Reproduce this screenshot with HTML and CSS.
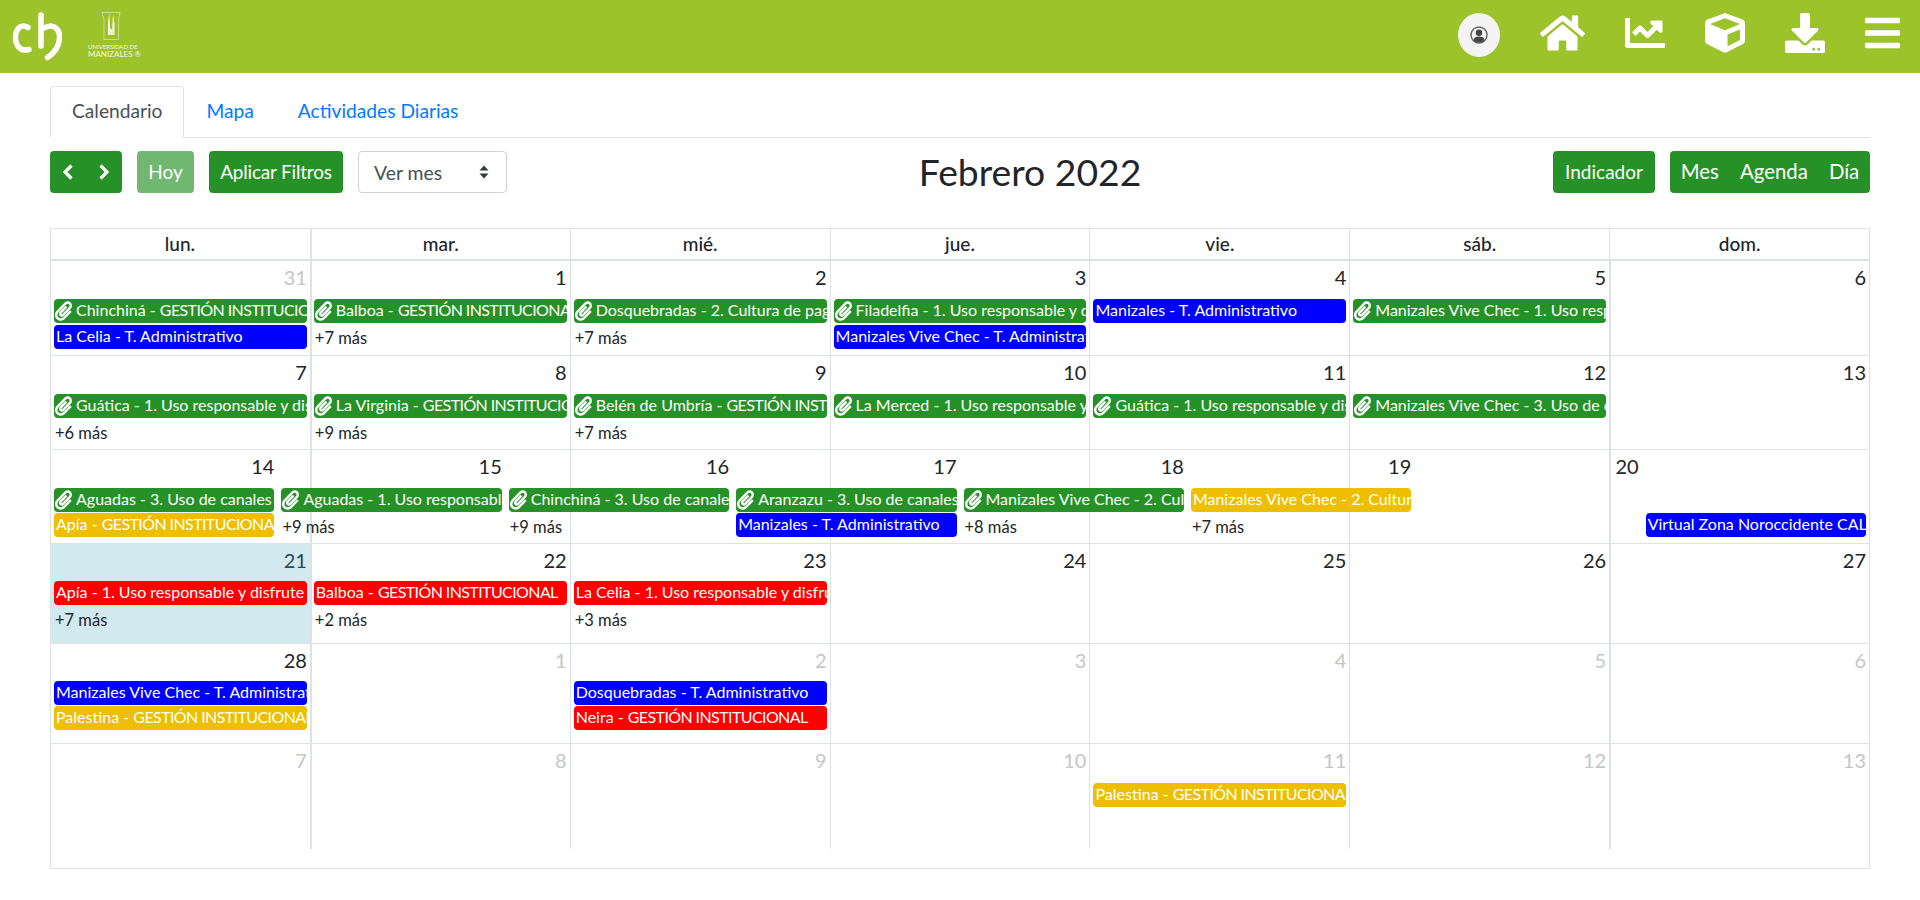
FILE: index.html
```html
<!DOCTYPE html>
<html lang="es">
<head>
<meta charset="utf-8">
<title>Calendario</title>
<link rel="stylesheet" href="styles.css">
</head>
<body>
<svg class="defs" width="0" height="0" aria-hidden="true">
  <symbol id="clip" viewBox="0 0 448 512"><path d="M43.246 466.142c-58.43-60.289-57.341-157.511 1.386-217.581L254.392 34c44.316-45.332 116.351-45.336 160.671 0 43.89 44.894 43.943 117.329 0 162.276L232.214 383.128c-29.855 30.537-78.633 30.111-107.982-.998-28.275-29.97-27.368-77.473 1.452-106.953l143.743-146.835c6.182-6.314 16.312-6.422 22.626-.241l22.861 22.379c6.315 6.182 6.422 16.312.241 22.626L171.427 319.927c-4.932 5.045-5.236 13.428-.648 18.292 4.372 4.634 11.245 4.711 15.688.165l182.849-186.851c19.613-20.062 19.613-52.725-.011-72.798-19.189-19.627-49.957-19.637-69.154 0L90.39 293.295c-34.763 35.56-35.299 93.12-1.191 128.313 34.01 35.093 88.985 35.137 123.058.286l172.06-175.999c6.177-6.319 16.307-6.433 22.626-.256l22.877 22.364c6.319 6.177 6.434 16.307.256 22.626l-172.06 175.998c-59.576 60.938-155.943 60.216-214.77-.485z"/></symbol>
</svg>

<header class="topbar">
  <div class="brand">
    <svg class="logo-ch" viewBox="0 0 62 73"><path d="M28 27.500C20 23 15.500 30 15.500 37.500C15.500 45 20 52 29 49.500"/><path d="M41 15V46"/><path d="M44 28C52 23 60 28 59.500 38C59 48 53 54 47.500 57.500"/></svg>
    <div class="logo-um">
      <svg class="logo-um-mark" viewBox="0 0 20 30"><path class="um-frame" d="M1 1.500H19L17.500 9V28.500H3V9Z"/><path class="um-tower" d="M7 24V12L8.300 3 9.400 24H11V24L12 3 13.400 12V24H11.500V18H8.800V24Z"/></svg>
      <span class="um-line1">UNIVERSIDAD DE</span>
      <span class="um-line2">MANIZALES ®</span>
    </div>
  </div>
  <nav class="topnav">
    <span class="avatar"><svg class="avatar-icon" viewBox="0 0 18 18"><circle class="avatar-ring" cx="9" cy="9" r="8"/><circle class="avatar-fill" cx="9" cy="6.800" r="3.200"/><path class="avatar-fill" d="M3.500 14.200C4 11.400 6 10.600 9 10.600s5 .8 5.500 3.600C13 15.800 11 16.400 9 16.400s-4-.6-5.500-2.200Z"/></svg></span>
    <svg class="nav-icon i-home" viewBox="0 0 576 512"><path d="M280.37 148.26L96 300.11V464a16 16 0 0 0 16 16l112.06-.29a16 16 0 0 0 15.92-16V368a16 16 0 0 1 16-16h64a16 16 0 0 1 16 16v95.64a16 16 0 0 0 16 16.05L464 480a16 16 0 0 0 16-16V300L295.67 148.26a12.19 12.19 0 0 0-15.3 0zM571.6 251.47L488 182.56V44.05a12 12 0 0 0-12-12h-56a12 12 0 0 0-12 12v72.61L318.47 43a48 48 0 0 0-61 0L4.34 251.47a12 12 0 0 0-1.6 16.9l25.5 31A12 12 0 0 0 45.15 301l235.22-193.74a12.19 12.19 0 0 1 15.3 0L530.9 301a12 12 0 0 0 16.9-1.6l25.5-31a12 12 0 0 0-1.7-16.93z"/></svg>
    <svg class="nav-icon" viewBox="0 0 512 512"><path d="M496 384H64V80c0-8.84-7.16-16-16-16H16C7.16 64 0 71.16 0 80v336c0 17.67 14.33 32 32 32h464c8.84 0 16-7.16 16-16v-32c0-8.84-7.16-16-16-16zM464 96H345.94c-21.38 0-32.09 25.85-16.97 40.97l32.4 32.4L288 242.75l-73.37-73.37c-12.5-12.5-32.76-12.5-45.25 0l-68.69 68.69c-6.25 6.25-6.25 16.38 0 22.63l22.62 22.62c6.25 6.25 16.38 6.25 22.63 0L192 237.25l73.37 73.37c12.5 12.5 32.76 12.5 45.25 0l96-96 32.4 32.4c15.12 15.12 40.97 4.41 40.97-16.97V112c.01-8.84-7.15-16-15.99-16z"/></svg>
    <svg class="nav-icon" viewBox="0 0 512 512"><path d="M239.1 6.3l-208 78c-18.7 7-31.1 25-31.1 45v225.1c0 18.2 10.3 34.8 26.5 42.9l208 104c13.5 6.8 29.4 6.8 42.9 0l208-104c16.3-8.1 26.5-24.8 26.5-42.9V129.3c0-20-12.4-37.9-31.1-44.9l-208-78C262 2.2 250 2.2 239.1 6.3zM256 68.4l192 72v1.1l-192 78-192-78v-1.1l192-72zm32 356V275.5l160-65v133.9l-160 80z"/></svg>
    <svg class="nav-icon" viewBox="0 0 512 512"><path d="M216 0h80c13.3 0 24 10.7 24 24v168h87.7c17.8 0 26.7 21.5 14.1 34.1L269.7 378.3c-7.5 7.5-19.8 7.5-27.3 0L90.1 226.1c-12.6-12.6-3.7-34.1 14.1-34.1H192V24c0-13.3 10.7-24 24-24zm296 376v112c0 13.3-10.7 24-24 24H24c-13.3 0-24-10.7-24-24V376c0-13.3 10.7-24 24-24h146.7l49 49c20.1 20.1 52.5 20.1 72.6 0l49-49H488c13.3 0 24 10.7 24 24zm-124 88c0-11-9-20-20-20s-20 9-20 20 9 20 20 20 20-9 20-20zm64 0c0-11-9-20-20-20s-20 9-20 20 9 20 20 20 20-9 20-20z"/></svg>
    <svg class="nav-icon i-bars" viewBox="0 0 448 512"><path d="M16 132h416c8.837 0 16-7.163 16-16V76c0-8.837-7.163-16-16-16H16C7.163 60 0 67.163 0 76v40c0 8.837 7.163 16 16 16zm0 160h416c8.837 0 16-7.163 16-16v-40c0-8.837-7.163-16-16-16H16c-8.837 0-16 7.163-16 16v40c0 8.837 7.163 16 16 16zm0 160h416c8.837 0 16-7.163 16-16v-40c0-8.837-7.163-16-16-16H16c-8.837 0-16 7.163-16 16v40c0 8.837 7.163 16 16 16z"/></svg>
  </nav>
</header>

<main class="page">
  <div class="tabs">
    <a class="tab tab-active">Calendario</a>
    <a class="tab">Mapa</a>
    <a class="tab">Actividades Diarias</a>
  </div>

  <div class="toolbar">
    <div class="tool-group">
      <div class="btn btn-arrows">
        <svg class="chev" viewBox="0 0 12 18"><path d="M9.500 2.500L3 9l6.500 6.500"/></svg>
        <svg class="chev" viewBox="0 0 12 18"><path d="M2.500 2.500L9 9l-6.500 6.500"/></svg>
      </div>
      <div class="btn btn-faded">Hoy</div>
      <div class="btn btn-filter">Aplicar Filtros</div>
      <div class="select">
        <span>Ver mes</span>
        <svg class="select-arrows" viewBox="0 0 10 14"><path d="M5 0.500L9.500 5.500H0.500ZM5 13.500L0.500 8.500H9.500Z"/></svg>
      </div>
    </div>
    <h2 class="title">Febrero 2022</h2>
    <div class="tool-group">
      <div class="btn btn-indicator">Indicador</div>
      <div class="btn btn-views"><span>Mes</span><span>Agenda</span><span>Día</span></div>
    </div>
  </div>

  <section class="cal">
    <div class="cal-head">
      <div class="head-cell">lun.</div><div class="head-cell">mar.</div><div class="head-cell">mié.</div><div class="head-cell">jue.</div><div class="head-cell">vie.</div><div class="head-cell">sáb.</div><div class="head-cell">dom.</div>
    </div>

    <div class="week week-1">
      <div class="week-bg"><i></i><i></i><i></i><i></i><i></i><i></i><i></i></div>
      <div class="week-fg">
        <div class="day"><div class="num muted">31</div><div class="ev green"><svg class="clip"><use href="#clip"/></svg>Chinchiná - <span class="caps">GESTIÓN INSTITUCIONAL</span></div><div class="ev blue">La Celia - T. Administrativo</div></div>
        <div class="day"><div class="num">1</div><div class="ev green"><svg class="clip"><use href="#clip"/></svg>Balboa - <span class="caps">GESTIÓN INSTITUCIONAL</span></div><div class="more">+7 más</div></div>
        <div class="day"><div class="num">2</div><div class="ev green"><svg class="clip"><use href="#clip"/></svg>Dosquebradas - 2. Cultura de pago</div><div class="more">+7 más</div></div>
        <div class="day"><div class="num">3</div><div class="ev green"><svg class="clip"><use href="#clip"/></svg>Filadelfia - 1. Uso responsable y disfrute</div><div class="ev blue">Manizales Vive Chec - T. Administrativo</div></div>
        <div class="day"><div class="num">4</div><div class="ev blue">Manizales - T. Administrativo</div></div>
        <div class="day"><div class="num">5</div><div class="ev green"><svg class="clip"><use href="#clip"/></svg>Manizales Vive Chec - 1. Uso responsable</div></div>
        <div class="day"><div class="num">6</div></div>
      </div>
    </div>

    <div class="week week-2">
      <div class="week-bg"><i></i><i></i><i></i><i></i><i></i><i></i><i></i></div>
      <div class="week-fg">
        <div class="day"><div class="num">7</div><div class="ev green"><svg class="clip"><use href="#clip"/></svg>Guática - 1. Uso responsable y disfrute</div><div class="more">+6 más</div></div>
        <div class="day"><div class="num">8</div><div class="ev green"><svg class="clip"><use href="#clip"/></svg>La Virginia - <span class="caps">GESTIÓN INSTITUCIONAL</span></div><div class="more">+9 más</div></div>
        <div class="day"><div class="num">9</div><div class="ev green"><svg class="clip"><use href="#clip"/></svg>Belén de Umbría - <span class="caps">GESTIÓN INSTITUCIONAL</span></div><div class="more">+7 más</div></div>
        <div class="day"><div class="num">10</div><div class="ev green"><svg class="clip"><use href="#clip"/></svg>La Merced - 1. Uso responsable y disfrute</div></div>
        <div class="day"><div class="num">11</div><div class="ev green"><svg class="clip"><use href="#clip"/></svg>Guática - 1. Uso responsable y disfrute</div></div>
        <div class="day"><div class="num">12</div><div class="ev green"><svg class="clip"><use href="#clip"/></svg>Manizales Vive Chec - 3. Uso de canales</div></div>
        <div class="day"><div class="num">13</div></div>
      </div>
    </div>

    <div class="week week-3">
      <div class="week-bg"><i></i><i></i><i></i><i></i><i></i><i></i><i></i></div>
      <div class="week-fg week-fg-8">
        <div class="day"><div class="num">14</div><div class="ev green"><svg class="clip"><use href="#clip"/></svg>Aguadas - 3. Uso de canales</div><div class="ev yellow">Apía - <span class="caps">GESTIÓN INSTITUCIONAL</span></div></div>
        <div class="day"><div class="num">15</div><div class="ev green"><svg class="clip"><use href="#clip"/></svg>Aguadas - 1. Uso responsable</div><div class="more">+9 más</div></div>
        <div class="day"><div class="num">16</div><div class="ev green"><svg class="clip"><use href="#clip"/></svg>Chinchiná - 3. Uso de canales</div><div class="more">+9 más</div></div>
        <div class="day"><div class="num">17</div><div class="ev green"><svg class="clip"><use href="#clip"/></svg>Aranzazu - 3. Uso de canales</div><div class="ev blue">Manizales - T. Administrativo</div></div>
        <div class="day"><div class="num">18</div><div class="ev green"><svg class="clip"><use href="#clip"/></svg>Manizales Vive Chec - 2. Cultura</div><div class="more">+8 más</div></div>
        <div class="day"><div class="num">19</div><div class="ev yellow">Manizales Vive Chec - 2. Cultura</div><div class="more">+7 más</div></div>
        <div class="day"><div class="num">20</div></div>
        <div class="day"><div class="num"></div><div class="ev ev-empty"></div><div class="ev blue">Virtual Zona Noroccidente CALDAS</div></div>
      </div>
    </div>

    <div class="week week-4">
      <div class="week-bg"><i class="today"></i><i></i><i></i><i></i><i></i><i></i><i></i></div>
      <div class="week-fg">
        <div class="day"><div class="num num-today">21</div><div class="ev red">Apía - 1. Uso responsable y disfrute</div><div class="more">+7 más</div></div>
        <div class="day"><div class="num">22</div><div class="ev red">Balboa - <span class="caps">GESTIÓN INSTITUCIONAL</span></div><div class="more">+2 más</div></div>
        <div class="day"><div class="num">23</div><div class="ev red">La Celia - 1. Uso responsable y disfrute</div><div class="more">+3 más</div></div>
        <div class="day"><div class="num">24</div></div>
        <div class="day"><div class="num">25</div></div>
        <div class="day"><div class="num">26</div></div>
        <div class="day"><div class="num">27</div></div>
      </div>
    </div>

    <div class="week week-5">
      <div class="week-bg"><i></i><i></i><i></i><i></i><i></i><i></i><i></i></div>
      <div class="week-fg">
        <div class="day"><div class="num">28</div><div class="ev blue">Manizales Vive Chec - T. Administrativo</div><div class="ev yellow">Palestina - <span class="caps">GESTIÓN INSTITUCIONAL</span></div></div>
        <div class="day"><div class="num muted">1</div></div>
        <div class="day"><div class="num muted">2</div><div class="ev blue">Dosquebradas - T. Administrativo</div><div class="ev red">Neira - <span class="caps">GESTIÓN INSTITUCIONAL</span></div></div>
        <div class="day"><div class="num muted">3</div></div>
        <div class="day"><div class="num muted">4</div></div>
        <div class="day"><div class="num muted">5</div></div>
        <div class="day"><div class="num muted">6</div></div>
      </div>
    </div>

    <div class="week week-6">
      <div class="week-bg"><i></i><i></i><i></i><i></i><i></i><i></i><i></i></div>
      <div class="week-fg">
        <div class="day"><div class="num muted">7</div></div>
        <div class="day"><div class="num muted">8</div></div>
        <div class="day"><div class="num muted">9</div></div>
        <div class="day"><div class="num muted">10</div></div>
        <div class="day"><div class="num muted">11</div><div class="ev yellow">Palestina - <span class="caps">GESTIÓN INSTITUCIONAL</span></div></div>
        <div class="day"><div class="num muted">12</div></div>
        <div class="day"><div class="num muted">13</div></div>
      </div>
    </div>
  </section>
</main>
</body>
</html>
```

FILE: styles.css
```css
* { box-sizing: border-box; }
html, body { margin: 0; padding: 0; }
body {
  font-family: "Lato", "Liberation Sans", sans-serif;
  color: #212529;
  background: #fff;
  font-size: 16px;
}
.defs { position: absolute; }

/* top bar */
.topbar {
  height: 73px;
  background: #9dc32b;
  display: flex;
  justify-content: space-between;
  align-items: flex-start;
  padding: 0 20px 0 0;
}
.brand { display: flex; align-items: flex-start; }
.logo-ch { width: 62px; height: 73px; display: block; }
.logo-ch path { fill: none; stroke: #fff; stroke-width: 5.500; stroke-linecap: round; }
.logo-um {
  margin: 11px 0 0 26px;
  width: 50px;
  display: flex;
  flex-direction: column;
  color: #f4f8e2;
  white-space: nowrap;
}
.logo-um-mark { width: 20px; height: 30px; margin: 0 0 3px 13px; display: block; }
.um-frame { fill: none; stroke: #dbe9a7; stroke-width: .7; }
.um-tower { fill: #fff; }
.um-line1 { font-size: 6px; line-height: 6px; }
.um-line2 { font-size: 8px; line-height: 8px; }

.topnav { display: flex; align-items: flex-start; gap: 40px; padding-top: 13px; }
.nav-icon { height: 40px; width: 40px; fill: #fff; display: block; }
.i-home { width: 45px; }
.i-bars { width: 35px; }
.avatar {
  width: 42px;
  height: 44px;
  border-radius: 50%;
  background: #f4f4f4;
  display: flex;
  align-items: center;
  justify-content: center;
}
.avatar-icon { width: 18px; height: 18px; }
.avatar-ring { fill: none; stroke: #666; stroke-width: 1.500; }
.avatar-fill { fill: #444; }

/* page */
.page { padding: 13px 50px 0; }
.tabs {
  display: flex;
  height: 52px;
  border-bottom: 1px solid #dee2e6;
}
.tab {
  padding: 0 21px;
  height: 52px;
  line-height: 48px;
  font-size: 19.200px;
  color: #007bff;
  border: 1px solid transparent;
  border-radius: 4px 4px 0 0;
}
.tab-active {
  color: #495057;
  background: #fff;
  border-color: #dee2e6 #dee2e6 #fff;
}

.toolbar {
  display: flex;
  justify-content: space-between;
  align-items: center;
  margin-top: 13px;
  height: 42px;
}
.tool-group { display: flex; gap: 15px; }
.btn {
  height: 42px;
  display: flex;
  align-items: center;
  justify-content: center;
  padding: 0 0 2px;
  background: #269126;
  color: #fff;
  border-radius: 4px;
  font-size: 19px;
  white-space: nowrap;
}
.btn-filter { width: 134px; letter-spacing: -.2px; }
.btn-faded { opacity: .65; width: 57px; }
.btn-arrows { width: 72px; justify-content: space-between; padding: 0 12px; }
.btn-indicator { width: 102px; }
.chev { width: 12px; height: 18px; fill: none; stroke: #fff; stroke-width: 3.200; }
.btn-views { width: 200px; gap: 21px; font-size: 20.400px; }
.select {
  width: 149px;
  height: 42px;
  border: 1px solid #ced4da;
  border-radius: 4px;
  background: #fff;
  color: #495057;
  font-size: 19.400px;
  display: flex;
  align-items: center;
  justify-content: space-between;
  padding: 0 17px 0 15px;
}
.select-arrows { width: 10px; height: 14px; fill: #343a40; }
.title { margin: 0; font-size: 37.300px; font-weight: 400; line-height: 1.2; }

/* calendar */
.cal {
  margin-top: 35px;
  height: 641px;
  border: 1px solid #dee2e6;
  display: flex;
  flex-direction: column;
}
.cal-head {
  display: grid;
  grid-template-columns: repeat(7, 1fr);
  height: 32px;
  margin-left: -1px;
  border-bottom: 2px solid #dee2e6;
}
.head-cell {
  text-align: center;
  font-size: 19px;
  font-weight: 500;
  line-height: 29px;
  border-left: 1px solid #dee2e6;
}
.head-cell:first-child { border-left: 0; }
.head-cell:nth-child(2) { border-left-width: 2px; }

.week { position: relative; border-bottom: 1px solid #dee2e6; margin-left: -1px; }
.week-1 { height: 95px; --top: 38px; --gap: 2px; }
.week-2 { height: 94px; --top: 38px; --gap: 2px; }
.week-3 { height: 94px; --top: 38px; --gap: 1px; }
.week-4 { height: 100px; --top: 37px; --gap: 1px; }
.week-5 { height: 100px; --top: 37px; --gap: 1px; }
.week-6 { height: 105px; --top: 39px; --gap: 1px; border-bottom: 0; }

.week-bg {
  position: absolute;
  inset: 0;
  display: grid;
  grid-template-columns: repeat(7, 1fr);
}
.week-bg i { display: block; border-left: 1px solid #dee2e6; }
.week-bg i:first-child { border-left: 0; }
.week-bg i:nth-child(2), .week-bg i:nth-child(7) { border-left-width: 2px; }
.week-bg .today { background: #d1e9ef; margin-left: 1px; }

.week-fg {
  position: relative;
  display: grid;
  grid-template-columns: repeat(7, 1fr);
}
.week-fg-8 { grid-template-columns: repeat(8, 1fr); }
.day { min-width: 0; }
.num {
  height: var(--top);
  padding: 1px 3px 0 0;
  text-align: right;
  font-size: 20px;
  line-height: 30px;
}
.muted { color: #c6c6c6; }
.num-today { color: #2b4a55; }
.ev {
  height: 24px;
  margin: 0 3px var(--gap) 4px;
  padding-left: 2px;
  border-radius: 4px;
  color: #fff;
  font-size: 16px;
  line-height: 22px;
  white-space: nowrap;
  overflow: hidden;
}
.caps { letter-spacing: -.6px; }
.ev-empty { visibility: hidden; }
.green { background: #269126; }
.blue { background: #0000ff; }
.red { background: #ff0000; }
.yellow { background: #eebf00; }
.clip { width: 17px; height: 20px; fill: #fff; vertical-align: -5px; margin: 0 4px 0 -1px; }
.more {
  margin: 5px 0 0 5px;
  font-size: 16.500px;
  line-height: 20px;
  color: #212529;
}
```
